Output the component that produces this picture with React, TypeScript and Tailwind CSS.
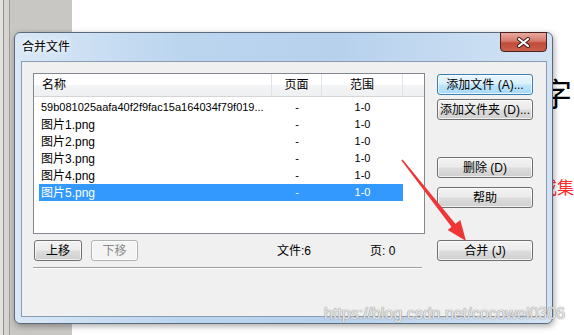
import React from 'react';

const ROWS = [
  { name: '59b081025aafa40f2f9fac15a164034f79f019...', page: '-', range: '1-0' },
  { name: '图片1.png', page: '-', range: '1-0' },
  { name: '图片2.png', page: '-', range: '1-0' },
  { name: '图片3.png', page: '-', range: '1-0' },
  { name: '图片4.png', page: '-', range: '1-0' },
  { name: '图片5.png', page: '-', range: '1-0', selected: true },
];

type BtnKind = 'normal' | 'focus' | 'disabled';

function WinButton({ children, kind = 'normal', className = '' }: { children: React.ReactNode; kind?: BtnKind; className?: string }) {
  const look =
    kind === 'focus'
      ? 'border-[#3c7fb1] bg-[linear-gradient(#eaf6fd_0%,#d9f0fc_48%,#bee6fd_52%,#a7d9f5_100%)] text-black'
      : kind === 'disabled'
        ? 'border-[#adb2b5] bg-[#f4f4f4] text-[#8a8a8a]'
        : 'border-[#707070] bg-[linear-gradient(#f2f2f2_0%,#ebebeb_48%,#dddddd_52%,#cfcfcf_100%)] text-black';
  return (
    <div
      className={`flex items-center justify-center rounded-[3px] border shadow-[inset_0_0_0_1px_rgba(255,255,255,0.7)] text-[12px] leading-none ${look} ${className}`}
    >
      {children}
    </div>
  );
}

export default function App() {
  return (
    <div className="relative w-[574px] h-[335px] overflow-hidden flex bg-white font-['Liberation_Sans','Noto_Sans_CJK_SC',sans-serif]">
      {/* left grey strip of the desktop app */}
      <div className="w-[82px] flex bg-[#c9c7c3]">
        <div className="w-[3px] bg-[#e2e1de]" />
        <div className="w-px bg-[#8f8f8f]" />
        <div className="w-[5px] bg-[#d6d4d0]" />
        <div className="w-px bg-[#9c9b98]" />
      </div>

      {/* document area */}
      <div className="flex-1 flex flex-col pl-[468px] pt-[75px]">
        <div className="text-[32px] leading-[40px] text-black">字</div>
        <div className="mt-[63px] text-[17px] leading-[22px] text-[#ff2a2a] whitespace-nowrap">或集</div>
      </div>

      {/* dialog window */}
      <div className="absolute left-[14px] top-[32px] w-[539px] h-[292px] rounded-[6px] border border-[#5d6a79] bg-[linear-gradient(90deg,#d9e8f7_0%,#bcd5ef_30%,#b7d1ed_60%,#d2e3f5_100%)] shadow-[1px_2px_6px_rgba(0,0,0,0.35)] flex flex-col">
        {/* title bar */}
        <div className="h-[28px] flex items-start">
          <div className="pl-[7px] pt-[6px] text-[12px] leading-[16px] text-black [text-shadow:0_0_6px_#ffffff,0_0_6px_#ffffff]">合并文件</div>
          <div className="ml-auto mr-[5px] -mt-px w-[47px] h-[20px] rounded-b-[4px] border border-[#4a2222] bg-[linear-gradient(#e8a99d_0%,#d67a6c_45%,#c24c3a_55%,#c8604c_100%)] flex items-center justify-center">
            <svg width="15" height="11" viewBox="0 0 15 11">
              <path d="M3 2 L12 9 M12 2 L3 9" stroke="#3a1a18" strokeWidth="4" strokeLinecap="round" />
              <path d="M3 2 L12 9 M12 2 L3 9" stroke="#ffffff" strokeWidth="2.2" strokeLinecap="round" />
            </svg>
          </div>
        </div>

        {/* client area */}
        <div className="ml-[6px] mr-[5px] h-[256px] border border-[#8a9cb1] bg-[#f0f0f0] flex pl-[11px] pt-[11px]">
          {/* left column */}
          <div className="w-[392px] flex flex-col">
            <div className="h-[161px] border border-[#828790] bg-white flex flex-col">
              <div className="h-[23px] flex border-b border-[#d5d5d5] bg-[linear-gradient(#ffffff_0%,#ffffff_50%,#f3f4f6_51%,#eef0f2_100%)] text-[12px] text-black">
                <div className="w-[238px] pl-[8px] flex items-center border-r border-[#dfe2e6]">名称</div>
                <div className="w-[50px] flex items-center justify-center border-r border-[#dfe2e6]">页面</div>
                <div className="w-[81px] flex items-center justify-center border-r border-[#dfe2e6]">范围</div>
                <div className="flex-1" />
              </div>
              <div className="pt-[2px] flex flex-col">
                {ROWS.map((r, i) => (
                  <div
                    key={i}
                    className={`ml-[5px] w-[364px] h-[17px] flex items-center text-[11px] ${r.selected ? 'bg-[#3399ff] text-white' : 'text-black'}`}
                  >
                    <div className={`w-[233px] pl-[2px] whitespace-nowrap ${i === 0 ? '' : 'text-[12px]'}`}>{r.name}</div>
                    <div className="w-[50px] text-center">{r.page}</div>
                    <div className="w-[81px] text-center">{r.range}</div>
                  </div>
                ))}
              </div>
            </div>

            <div className="mt-[6px] flex items-center">
              <WinButton className="ml-px w-[48px] h-[21px]">上移</WinButton>
              <WinButton kind="disabled" className="ml-[9px] w-[47px] h-[21px]">下移</WinButton>
              <span className="ml-[139px] w-[93px] text-[12px] text-black whitespace-nowrap">文件:6</span>
              <span className="text-[12px] text-black whitespace-nowrap">页: 0</span>
            </div>

            <div className="mt-[6px] w-[389px] h-px bg-[#a0a0a0]" />
            <div className="w-[389px] h-px bg-white" />
          </div>

          {/* right column */}
          <div className="ml-[12px] pt-px flex flex-col">
            <WinButton kind="focus" className="w-[96px] h-[21px]">添加文件 (A)...</WinButton>
            <WinButton className="mt-[4px] w-[96px] h-[21px]">添加文件夹 (D)...</WinButton>
            <WinButton className="mt-[37px] w-[96px] h-[21px]">删除 (D)</WinButton>
            <WinButton className="mt-[9px] w-[96px] h-[21px]">帮助</WinButton>
            <WinButton className="mt-[32px] w-[96px] h-[21px]">合并 (J)</WinButton>
          </div>
        </div>
      </div>

      {/* red annotation arrow */}
      <svg className="absolute left-0 top-0 pointer-events-none" width="574" height="335" viewBox="0 0 574 335">
        <polygon points="402.6,159.5 401.4,160.5 452,227.5 456,224.5" fill="#ee3636" />
        <polygon points="460.3,220.1 447.7,229.9 466,241" fill="#ee3636" />
      </svg>

      {/* watermark */}
      <div className="absolute left-[324px] top-[305px] text-[16px] leading-[18px] text-[#f2f2f2]/90 whitespace-nowrap font-['Liberation_Sans',sans-serif] [text-shadow:0_0_1px_#8c8c8c,0_0_1px_#8c8c8c]">
        https://blog.csdn.net/cocowei0306
      </div>
    </div>
  );
}
